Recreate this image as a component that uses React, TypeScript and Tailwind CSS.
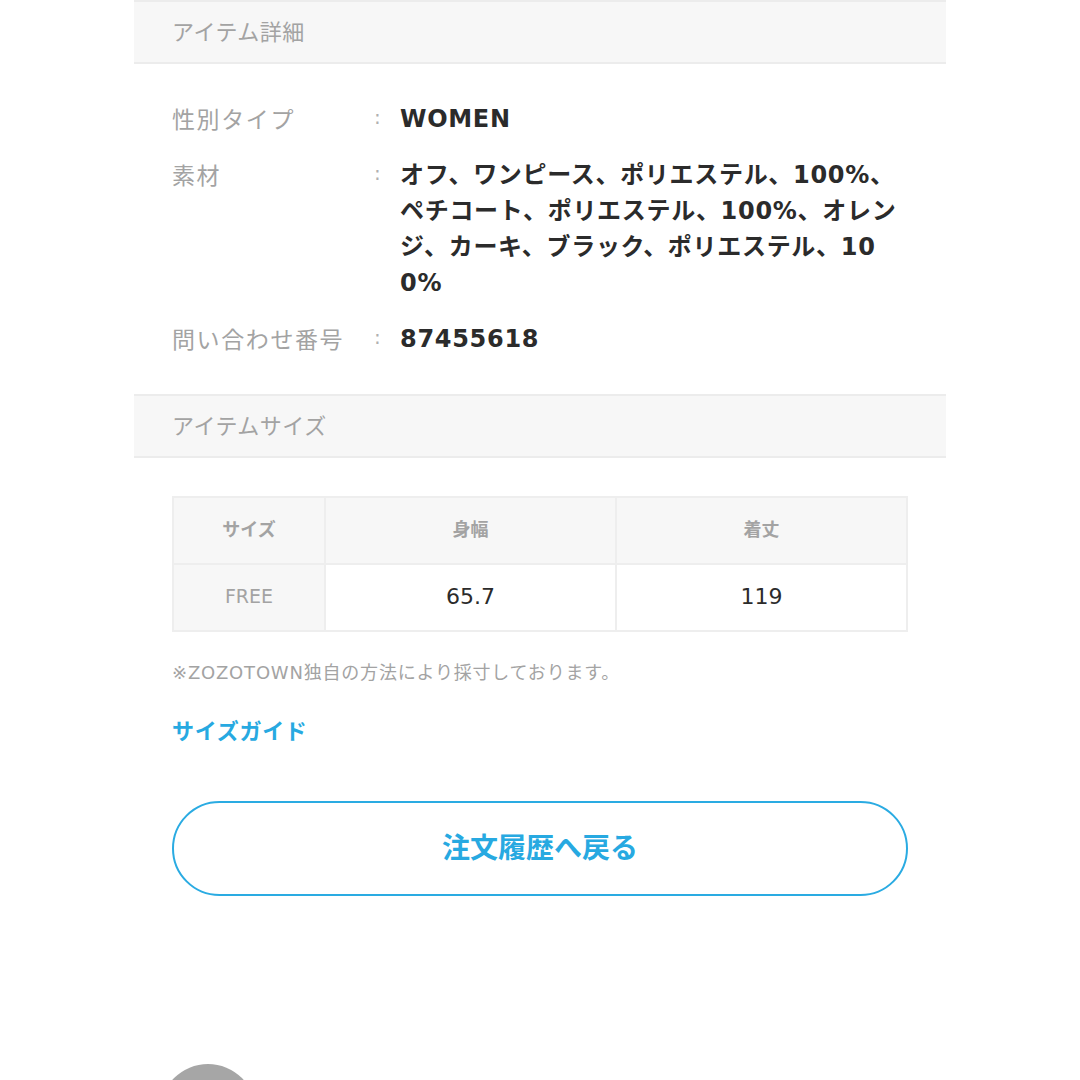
import React from "react";

const font = { fontFamily: '"DejaVu Sans", "Noto Sans CJK JP", sans-serif' };
const cjk = { fontFamily: '"Noto Sans CJK JP", "Noto Sans", sans-serif' };

function SectionHeader({ title }: { title: string }) {
  return (
    <div className="h-[64px] flex items-center px-[38px] pb-[5px] bg-[#f7f7f7] border-y-2 border-[#ececec]">
      <span className="text-[22px] text-[#a3a3a3] leading-none tracking-[0.5px]" style={cjk}>{title}</span>
    </div>
  );
}

function DetailRow({ label, children }: { label: string; children: React.ReactNode }) {
  return (
    <div className="flex leading-[36px]">
      <div className="w-[200px] shrink-0 text-[23px] text-[#a3a3a3] -mt-[1px] tracking-[1.6px]" style={cjk}>{label}</div>
      <div className="w-[28px] shrink-0 text-[20px] text-[#b0b0b0] text-left pl-[2px] -mt-[2px]">:</div>
      <div className="flex-1 text-[24px] font-bold text-[#2b2b2b] tracking-[0.7px]">{children}</div>
    </div>
  );
}

export default function App() {
  return (
    <div className="w-full min-h-[1080px] bg-white overflow-hidden" style={font}>
      <div className="w-[812px] mx-auto h-[1080px] overflow-hidden">
        <SectionHeader title="アイテム詳細" />
        <div className="px-[38px] pt-[37px] pb-[37px] flex flex-col gap-[20px]">
          <DetailRow label="性別タイプ">WOMEN</DetailRow>
          <DetailRow label="素材">
            オフ、ワンピース、ポリエステル、100%、
            <br />
            ペチコート、ポリエステル、100%、オレン
            <br />
            ジ、カーキ、ブラック、ポリエステル、10
            <br />
            0%
          </DetailRow>
          <DetailRow label="問い合わせ番号">87455618</DetailRow>
        </div>
        <SectionHeader title="アイテムサイズ" />
        <div className="px-[38px] pt-[38px]">
          <table className="w-full border-collapse border-2 border-[#eeeeee] table-fixed">
            <colgroup>
              <col className="w-[152px]" />
              <col />
              <col />
            </colgroup>
            <thead>
              <tr className="h-[67px] bg-[#f7f7f7]">
                <th className="border-2 border-[#eeeeee] text-[18px] font-bold text-[#a3a3a3] pb-[4px]" style={cjk}>サイズ</th>
                <th className="border-2 border-[#eeeeee] text-[18px] font-bold text-[#a3a3a3] pb-[4px]" style={cjk}>身幅</th>
                <th className="border-2 border-[#eeeeee] text-[18px] font-bold text-[#a3a3a3] pb-[4px]" style={cjk}>着丈</th>
              </tr>
            </thead>
            <tbody>
              <tr className="h-[67px]">
                <td className="border-2 border-[#eeeeee] bg-[#f7f7f7] text-center text-[19px] text-[#a3a3a3] pb-[2px]">FREE</td>
                <td className="border-2 border-[#eeeeee] text-center text-[22px] text-[#2b2b2b] pb-[2px]">65.7</td>
                <td className="border-2 border-[#eeeeee] text-center text-[22px] text-[#2b2b2b] pb-[2px]">119</td>
              </tr>
            </tbody>
          </table>
          <p className="mt-[27px] text-[18px] leading-[28px] text-[#a3a3a3] tracking-[0.8px]">※ZOZOTOWN独自の方法により採寸しております。</p>
          <p className="mt-[27px] text-[22px] leading-[30px] font-bold text-[#27a9e1] tracking-[0.7px]" style={cjk}>サイズガイド</p>
          <button className="mt-[57px] w-full h-[95px] rounded-full border-2 border-[#2aabe2] bg-white flex items-center justify-center pb-[5px]">
            <span className="text-[28px] font-bold text-[#27a9e1]" style={cjk}>注文履歴へ戻る</span>
          </button>
        </div>
        <div className="ml-[26px] mt-[168px] w-[96px] h-[96px] rounded-full bg-[#a6a6a6]" />
      </div>
    </div>
  );
}
